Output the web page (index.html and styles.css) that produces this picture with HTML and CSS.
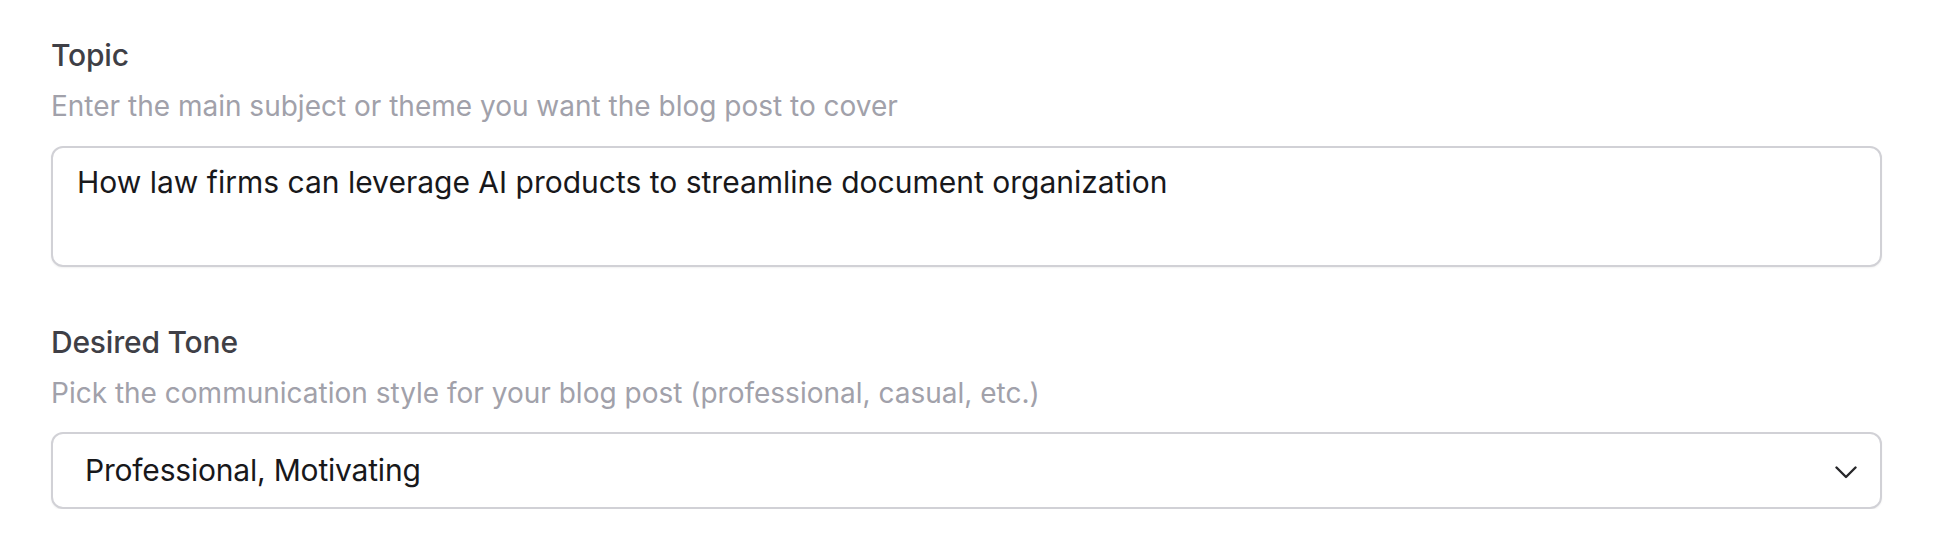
FILE: index.html
```html
<!DOCTYPE html>
<html lang="en">
<head>
<meta charset="utf-8">
<title>Blog post settings</title>
<link rel="stylesheet" href="styles.css">
</head>
<body>
<form class="form">
  <div class="field">
    <label class="label" for="topic">Topic</label>
    <p class="help">Enter the main subject or theme you want the blog post to cover</p>
    <textarea class="textarea" id="topic" rows="2">How law firms can leverage AI products to streamline document organization</textarea>
  </div>
  <div class="field field-tone">
    <label class="label" for="tone">Desired Tone</label>
    <p class="help">Pick the communication style for your blog post (professional, casual, etc.)</p>
    <div class="select" id="tone" role="combobox" aria-expanded="false" tabindex="0">
      <span class="select-value">Professional, Motivating</span>
      <svg class="chevron" width="22" height="13" viewBox="0 0 22 13" aria-hidden="true">
        <path d="M1.5 1.5 L11 11 L20.5 1.5" fill="none" stroke="#27272a" stroke-width="2.4" stroke-linecap="round" stroke-linejoin="round"/>
      </svg>
    </div>
  </div>
</form>
</body>
</html>
```
FILE: styles.css
```css
* { box-sizing: border-box; }
html, body { margin: 0; background: #ffffff; }
body {
  font-family: "Inter", "Liberation Sans", sans-serif;
  color: #18181b;
}
.form {
  padding: 35px 58px 0 51px;
  display: flex;
  flex-direction: column;
}
.field { display: flex; flex-direction: column; }
.field-tone { margin-top: 55px; }
.label {
  font-size: 30px;
  line-height: 40px;
  font-weight: 500;
  color: #3f3f46;
  letter-spacing: -0.2px;
}
.help {
  margin: 11px 0 0;
  font-size: 28px;
  line-height: 40px;
  color: #a1a1aa;
}
.textarea {
  display: block;
  margin-top: 20px;
  width: 100%;
  height: 121px;
  padding: 12px 24px;
  border: 2px solid #d1d1d6;
  border-radius: 12px;
  font-family: inherit;
  font-size: 30px;
  line-height: 45px;
  color: #18181b;
  resize: none;
  overflow: hidden;
  background: #fff;
  box-shadow: 0 1px 2px rgba(0, 0, 0, 0.06);
  outline: none;
}
.select {
  margin-top: 19px;
  height: 77px;
  display: flex;
  align-items: center;
  justify-content: space-between;
  padding: 0 23px 0 32px;
  border: 2px solid #d1d1d6;
  border-radius: 12px;
  background: #fff;
  box-shadow: 0 1px 2px rgba(0, 0, 0, 0.06);
}
.select-value {
  font-size: 30px;
  line-height: 45px;
  color: #18181b;
  letter-spacing: -0.2px;
}
.chevron { display: block; margin-top: 3px; }
```
